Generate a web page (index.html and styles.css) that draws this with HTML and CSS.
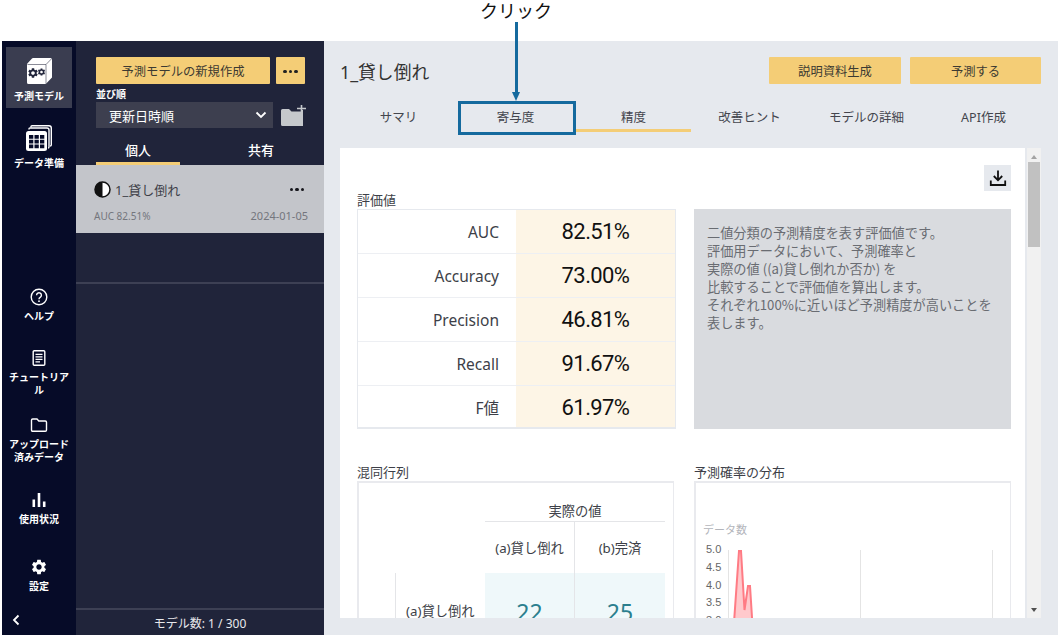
FILE: index.html
```html
<!DOCTYPE html>
<html lang="ja">
<head>
  <meta charset="UTF-8" />
  <title>予測モデル</title>
  <link rel="stylesheet" href="styles.css">
</head>
<body>
  <svg class="defs" width="0" height="0">
    <symbol id="gear" viewBox="0 0 24 24">
      <path d="M19.14 12.94c.04-.3.06-.61.06-.94 0-.32-.02-.64-.07-.94l2.03-1.58c.18-.14.23-.41.12-.61l-1.92-3.32c-.12-.22-.37-.29-.59-.22l-2.39.96c-.5-.38-1.03-.7-1.62-.94l-.36-2.54c-.04-.24-.24-.41-.48-.41h-3.84c-.24 0-.43.17-.47.41l-.36 2.54c-.59.24-1.13.57-1.62.94l-2.39-.96c-.22-.08-.47 0-.59.22L2.74 8.87c-.12.21-.08.47.12.61l2.03 1.58c-.05.3-.09.63-.09.94s.02.64.07.94l-2.03 1.58c-.18.14-.23.41-.12.61l1.92 3.32c.12.22.37.29.59.22l2.39-.96c.5.38 1.03.7 1.62.94l.36 2.54c.05.24.24.41.48.41h3.84c.24 0 .44-.17.47-.41l.36-2.54c.59-.24 1.13-.56 1.62-.94l2.39.96c.22.08.47 0 .59-.22l1.92-3.32c.12-.22.07-.47-.12-.61l-2.01-1.58zM12 15.6c-1.98 0-3.6-1.62-3.6-3.6s1.62-3.6 3.6-3.6 3.6 1.62 3.6 3.6-1.62 3.6-3.6 3.6z"/>
    </symbol>
  </svg>

  <div class="note-label">クリック</div>
  <div class="note-arrow"></div>
  <div class="note-box"></div>

  <div class="app">
    <nav class="sidebar">
      <div class="nav-item nav-active">
        <svg class="icon-cube" viewBox="0 0 25 26">
          <path fill="#fff" d="M6 0H23.500Q25 0 25 1.500V19.500L19.500 25.200Q19 26 18 26H1.500Q0 26 0 24.500V6.500Q0 5.800 .6 5.200L5 .6Q5.400 0 6 0Z"/>
          <path fill="none" stroke="#3a3d50" stroke-width=".6" d="M.5 6.500H19V25.500M19 6.500L24.700 .6"/>
          <use href="#gear" x="0" y="9" width="12" height="12" fill="#20243a"/>
          <use href="#gear" x="10" y="9.500" width="9" height="9" fill="#20243a"/>
        </svg>
        <span>予測モデル</span>
      </div>
      <div class="nav-item nav-data">
        <svg class="icon-table" viewBox="0 0 26 26">
          <path fill="none" stroke="#fff" stroke-width="1.400" d="M5 2.500V1.500Q5 .7 6 .7H23Q25.300 .7 25.300 3V20Q25.300 21 24 21"/>
          <path fill="none" stroke="#fff" stroke-width="1.400" d="M3 4.500V3.800Q3 3 4 3H21Q23 3 23 5V22Q23 23 22 23"/>
          <rect x="0" y="6" width="21" height="20" rx="2.500" fill="#fff"/>
          <path fill="#060b28" d="M3 10h4.300v3.700H3zM8.500 10h4.300v3.700H8.500zM14 10h4.300v3.700H14zM3 14.800h4.300v3.700H3zM8.500 14.800h4.300v3.700H8.500zM14 14.800h4.300v3.700H14zM3 19.600h4.300v3.700H3zM8.500 19.600h4.300v3.700H8.500zM14 19.600h4.300v3.700H14z"/>
        </svg>
        <span>データ準備</span>
      </div>

      <div class="nav-bottom">
        <div class="nav-small nav-help">
          <svg class="icon-18" viewBox="0 0 18 18">
            <circle cx="9" cy="9" r="7.800" fill="none" stroke="#fff" stroke-width="1.400"/>
            <path d="M6.600 7.200a2.400 2.400 0 1 1 3.600 2.100c-.8.500-1.200.9-1.200 1.900" fill="none" stroke="#fff" stroke-width="1.400"/>
            <circle cx="9" cy="13.200" r=".9" fill="#fff"/>
          </svg>
          <span>ヘルプ</span>
        </div>
        <div class="nav-small nav-tutorial">
          <svg class="icon-18" viewBox="0 0 18 18">
            <rect x="3.200" y="1.800" width="11.600" height="14.400" rx="1" fill="none" stroke="#fff" stroke-width="1.400"/>
            <path d="M5.500 5.300h7M5.500 7.800h7M5.500 10.300h7M5.500 12.800h4.500" stroke="#fff" stroke-width="1.200"/>
          </svg>
          <span>チュートリアル</span>
        </div>
        <div class="nav-small nav-upload">
          <svg class="icon-18" viewBox="0 0 18 18">
            <path d="M1.500 4.200Q1.500 3 2.700 3H7L8.800 5H15.300Q16.500 5 16.500 6.200V14Q16.500 15.200 15.300 15.200H2.700Q1.500 15.200 1.500 14Z" fill="none" stroke="#fff" stroke-width="1.400"/>
          </svg>
          <span>アップロード<br>済みデータ</span>
        </div>
        <div class="nav-small nav-usage">
          <svg class="icon-18" viewBox="0 0 18 18">
            <path fill="#fff" d="M2.500 8.500h2.600V16H2.500zM7.700 2h2.600v14H7.700zM12.900 10.500h2.600V16h-2.600z"/>
          </svg>
          <span>使用状況</span>
        </div>
        <div class="nav-small nav-settings">
          <svg class="icon-18" fill="#fff"><use href="#gear" width="18" height="18"/></svg>
          <span>設定</span>
        </div>
        <div class="nav-collapse">
          <svg width="8" height="12" viewBox="0 0 8 12"><path d="M6.500 1.500L2 6l4.500 4.500" fill="none" stroke="#fff" stroke-width="1.800"/></svg>
        </div>
      </div>
    </nav>

    <aside class="model-panel">
      <div class="panel-head">
        <div class="new-row">
          <button class="btn-yellow btn-new">予測モデルの新規作成</button>
          <button class="btn-yellow btn-more"><span class="dots"><i></i><i></i><i></i></span></button>
        </div>
        <div class="sort-label">並び順</div>
        <div class="sort-row">
          <div class="sort-select">
            <span>更新日時順</span>
            <svg width="12" height="8" viewBox="0 0 12 8"><path d="M1.500 1.500L6 6l4.500-4.500" fill="none" stroke="#fff" stroke-width="1.800"/></svg>
          </div>
          <svg class="icon-folder-add" viewBox="0 0 25 21">
            <path fill="#c5c8cc" d="M0 5.500Q0 4 1.500 4H8L10.500 6.500H20V5H22V21H1.500Q0 21 0 19.500Z"/>
            <path stroke="#c5c8cc" stroke-width="1.600" d="M20.500 0V9M16 3.500H25"/>
          </svg>
        </div>
        <div class="owner-tabs">
          <div class="owner-tab owner-active">個人</div>
          <div class="owner-tab">共有</div>
        </div>
      </div>

      <div class="model-card">
        <div class="card-top">
          <svg width="17" height="17" viewBox="0 0 17 17">
            <circle cx="8.500" cy="8.500" r="7.500" fill="#fff" stroke="#111" stroke-width="1.500"/>
            <path d="M8.500 1a7.500 7.500 0 0 0 0 15z" fill="#111"/>
          </svg>
          <span class="card-name">1_貸し倒れ</span>
          <span class="dots dots-dark"><i></i><i></i><i></i></span>
        </div>
        <div class="card-meta">
          <span>AUC 82.51%</span>
          <span class="card-date">2024-01-05</span>
        </div>
      </div>

      <div class="list-rest"></div>
      <div class="panel-foot">モデル数: 1 / 300</div>
    </aside>

    <main class="main">
      <header class="main-head">
        <h1>1_貸し倒れ</h1>
        <div class="head-btns">
          <button class="btn-yellow btn-explain">説明資料生成</button>
          <button class="btn-yellow btn-predict">予測する</button>
        </div>
      </header>

      <div class="tabs">
        <div class="tab">サマリ</div>
        <div class="tab">寄与度</div>
        <div class="tab tab-active">精度</div>
        <div class="tab">改善ヒント</div>
        <div class="tab">モデルの詳細</div>
        <div class="tab">API作成</div>
      </div>

      <div class="content-row">
        <section class="content">
          <div class="tools">
            <div class="btn-download">
              <svg width="18" height="18" viewBox="0 0 18 18">
                <path d="M9 1.500V11M4.800 7L9 11.300 13.200 7M1.800 11.500V16H16.200V11.500" fill="none" stroke="#111" stroke-width="1.800"/>
              </svg>
            </div>
          </div>

          <div class="sections">
            <div>
              <div class="sec-title">評価値</div>
              <div class="scores">
                <div class="score-row"><div class="score-name">AUC</div><div class="score-val">82.51%</div></div>
                <div class="score-row"><div class="score-name">Accuracy</div><div class="score-val">73.00%</div></div>
                <div class="score-row"><div class="score-name">Precision</div><div class="score-val">46.81%</div></div>
                <div class="score-row"><div class="score-name">Recall</div><div class="score-val">91.67%</div></div>
                <div class="score-row"><div class="score-name">F値</div><div class="score-val">61.97%</div></div>
              </div>
            </div>
            <div>
              <div class="sec-title">&nbsp;</div>
              <div class="explain">
                二値分類の予測精度を表す評価値です。<br>
                評価用データにおいて、予測確率と<br>
                実際の値 ((a)貸し倒れか否か) を<br>
                比較することで評価値を算出します。<br>
                それぞれ100%に近いほど予測精度が高いことを<br>
                表します。
              </div>
            </div>

            <div class="sec-lower">
              <div class="sec-title">混同行列</div>
              <div class="box-lower">
                <div class="matrix">
                  <div class="mx-actual">実際の値</div>
                  <div class="mx-head mx-split">(a)貸し倒れ</div>
                  <div class="mx-head">(b)完済</div>
                  <div class="mx-label">(a)貸し倒れ</div>
                  <div class="mx-val mx-split">22</div>
                  <div class="mx-val">25</div>
                </div>
              </div>
            </div>
            <div class="sec-lower">
              <div class="sec-title">予測確率の分布</div>
              <div class="box-lower">
                <svg class="dist-chart" viewBox="696 483 312 200">
                  <text x="703" y="534" class="chart-title">データ数</text>
                  <text x="706" y="553" class="chart-tick">5.0</text>
                  <text x="706" y="571" class="chart-tick">4.5</text>
                  <text x="706" y="589" class="chart-tick">4.0</text>
                  <text x="706" y="606" class="chart-tick">3.5</text>
                  <text x="706" y="624" class="chart-tick">3.0</text>
                  <path d="M728.500 550V680M860.500 550V680M992.500 550V680" stroke="#e4e4e4" fill="none"/>
                  <path d="M730 680L739 551H741L744.500 610L748 586H750L756 680Z" fill="#ffc9cc" stroke="#ff7b84" stroke-width="2"/>
                </svg>
              </div>
            </div>
          </div>
        </section>

        <div class="scrollbar">
          <div class="scroll-up"></div>
          <div class="scroll-thumb"></div>
          <div class="scroll-down"></div>
        </div>
      </div>
    </main>
  </div>
</body>
</html>
```

FILE: styles.css
```css
* {
  box-sizing: border-box;
}
html, body {
  margin: 0;
  background: #fff;
  overflow: hidden;
}
body {
  position: relative;
  height: 637px;
  font-family: "Noto Sans", "Noto Sans CJK JP", sans-serif;
  color: #333;
}
.defs {
  position: absolute;
}

/* annotation over the screenshot */
.note-label {
  position: absolute;
  left: 471px;
  top: 0;
  width: 90px;
  text-align: center;
  font-family: "Noto Sans CJK JP", sans-serif;
  font-size: 18px;
  line-height: 20px;
  color: #111;
  z-index: 3;
}
.note-arrow {
  position: absolute;
  left: 515px;
  top: 22px;
  width: 3px;
  height: 72px;
  background: #156a9e;
  z-index: 3;
}
.note-arrow::after {
  content: "";
  position: absolute;
  left: -3px;
  top: 70px;
  border-left: 4.500px solid transparent;
  border-right: 4.500px solid transparent;
  border-top: 9px solid #156a9e;
}
.note-box {
  position: absolute;
  left: 458px;
  top: 101px;
  width: 118px;
  height: 34px;
  border: 3px solid #156a9e;
  z-index: 3;
}

.app {
  display: flex;
  margin: 41px 0 0 2px;
  width: 1056px;
  height: 594px;
}

/* left nav */
.sidebar {
  width: 74px;
  flex: none;
  display: flex;
  flex-direction: column;
  background: #060b28;
  color: #fff;
  font-size: 10px;
  font-weight: 700;
  line-height: 13px;
  text-align: center;
}
.sidebar span {
  display: block;
}
.nav-item {
  display: flex;
  flex-direction: column;
  align-items: center;
}
.nav-active {
  margin: 6px 4px 0;
  height: 61px;
  padding-top: 11px;
  background: #3a3d50;
}
.nav-active span {
  margin-top: 6px;
}
.icon-cube {
  width: 25px;
  height: 26px;
  display: block;
}
.nav-data {
  margin-top: 17px;
}
.nav-data span {
  margin-top: 6px;
}
.icon-table {
  width: 26px;
  height: 26px;
  display: block;
}
.nav-bottom {
  margin-top: auto;
}
.nav-small {
  display: flex;
  flex-direction: column;
  align-items: center;
}
.nav-small span {
  margin-top: 4px;
  padding: 0 5px;
}
.icon-18 {
  width: 18px;
  height: 18px;
  display: block;
}
.nav-help { height: 61px; }
.nav-tutorial { height: 67px; }
.nav-upload { height: 75px; }
.nav-usage { height: 67px; }
.nav-settings { height: 50px; }
.nav-collapse {
  height: 27px;
  padding: 6px 0 0 10px;
  text-align: left;
}

/* model list */
.model-panel {
  width: 248px;
  flex: none;
  display: flex;
  flex-direction: column;
  background: #20243a;
  color: #fff;
}
.panel-head {
  padding: 16px 19px 0 20px;
}
.new-row {
  display: flex;
  justify-content: space-between;
}
button {
  font-family: inherit;
  border: 0;
  padding: 0;
}
.btn-yellow {
  height: 27px;
  background: #f4cd76;
  color: #3c3a32;
  font-size: 12.300px;
  border-radius: 1px;
}
.btn-new {
  width: 174px;
}
.btn-more {
  width: 29px;
}
.dots {
  display: inline-flex;
  gap: 2px;
  vertical-align: middle;
}
.dots i {
  width: 3.500px;
  height: 3.500px;
  border-radius: 50%;
  background: #222;
}
.sort-label {
  margin-top: 3px;
  font-size: 10px;
  font-weight: 700;
  line-height: 14px;
}
.sort-row {
  display: flex;
  align-items: center;
  justify-content: space-between;
  margin-top: 1px;
}
.sort-select {
  width: 177px;
  height: 26px;
  padding: 0 6px 0 13px;
  display: flex;
  align-items: center;
  justify-content: space-between;
  background: #3d3f4f;
  font-size: 13px;
}
.icon-folder-add {
  width: 25px;
  height: 21px;
  margin-right: -1px;
}
.owner-tabs {
  display: flex;
  margin-top: 9px;
  margin-right: -1px;
  height: 28px;
}
.owner-tab {
  width: 84px;
  text-align: center;
  font-size: 13px;
  font-weight: 500;
  line-height: 26px;
}
.owner-tab + .owner-tab {
  margin-left: 39px;
}
.owner-active {
  border-bottom: 3px solid #f4cd76;
}
.model-card {
  height: 68px;
  padding: 16px 16px 0 18px;
  background: #c3c5ca;
  color: #3d3f48;
}
.card-top {
  display: flex;
  align-items: center;
  height: 17px;
}
.card-name {
  margin-left: 4px;
  font-size: 13px;
  flex: 1;
}
.dots-dark {
  margin-right: 4px;
}
.dots-dark i {
  background: #16161c;
}
.card-meta {
  display: flex;
  justify-content: space-between;
  margin-top: 11px;
  font-size: 10px;
  line-height: 14px;
  color: #74767d;
}
.card-date {
  font-size: 11px;
}
.list-rest {
  flex: 1;
  background: linear-gradient(#20243a 49px, #3d4054 49px, #3d4054 51px, #20243a 51px);
}
.panel-foot {
  height: 27px;
  border-top: 2px solid #3d4054;
  text-align: center;
  font-size: 12px;
  line-height: 27px;
  color: #e8e8ec;
}

/* main */
.main {
  flex: 1;
  padding: 16px 17px 17px 16px;
  display: flex;
  flex-direction: column;
  background: #e6e9ee;
  min-width: 0;
}
.main-head {
  display: flex;
  justify-content: space-between;
  align-items: center;
  height: 27px;
}
h1 {
  margin: 0;
  font-size: 17.800px;
  font-weight: 400;
  color: #333;
}
.head-btns {
  display: flex;
  gap: 9px;
}
.btn-explain {
  width: 132px;
}
.btn-predict {
  width: 131px;
}
.tabs {
  display: grid;
  grid-template-columns: repeat(6, 117px);
  margin-top: 17px;
  height: 31px;
}
.tab {
  text-align: center;
  font-size: 12.500px;
  line-height: 33px;
  color: #43454d;
}
.tab-active {
  margin-left: 2px;
  border-bottom: 3px solid #f4cd76;
  height: 31px;
}
.content-row {
  flex: 1;
  display: flex;
  margin-top: 16px;
  min-height: 0;
}
.content {
  width: 685px;
  flex: none;
  padding: 17px 14px 0 17px;
  background: #fff;
  overflow: hidden;
}
.tools {
  display: flex;
  justify-content: flex-end;
}
.btn-download {
  width: 27px;
  height: 26px;
  display: flex;
  align-items: center;
  justify-content: center;
  background: #e6e9ee;
}
.sections {
  display: grid;
  grid-template-columns: 319px 317px;
  column-gap: 18px;
}
.sec-title {
  font-size: 13px;
  line-height: 18px;
  color: #3d3f48;
}
.scores {
  border: 1px solid #e6e9ee;
  border-bottom-width: 2px;
  height: 220px;
  overflow: hidden;
}
.score-row {
  display: flex;
  height: 44px;
  border-bottom: 1px solid #edeff3;
}
.score-row:last-child {
  border-bottom: 0;
}
.score-name {
  width: 158px;
  padding-right: 17px;
  text-align: right;
  font-size: 15.500px;
  line-height: 44px;
  color: #3d3f48;
}
.score-val {
  flex: 1;
  text-align: center;
  font-family: Roboto, sans-serif;
  font-size: 22px;
  letter-spacing: -.6px;
  line-height: 44px;
  color: #111;
  background: #fdf5e6;
}
.explain {
  height: 220px;
  padding: 15px 13px;
  background: #d9dbdf;
  font-size: 13.200px;
  line-height: 18px;
  color: #696c72;
  font-family: "Noto Sans CJK JP", sans-serif;
}
.sec-lower {
  margin-top: 34px;
}
.box-lower {
  width: 317px;
  height: 240px;
  border: 2px solid #e9eaee;
  border-right-width: 1px;
}

/* confusion matrix */
.matrix {
  display: grid;
  grid-template-columns: 126px 90px 90px;
  grid-template-rows: 39px 51px 76px;
  font-size: 13.300px;
  color: #3d3f48;
}
.mx-actual {
  grid-column: 2 / 4;
  border-bottom: 1px solid #e4e5e8;
  text-align: center;
  line-height: 57px;
  overflow: hidden;
}
.mx-head {
  text-align: center;
  line-height: 52px;
}
.mx-split {
  border-right: 1px solid #e4e5e8;
}
.mx-head.mx-split {
  grid-column: 2;
}
.mx-label {
  grid-column: 1;
  margin-left: 36px;
  padding-left: 10px;
  border-left: 1px solid #e4e5e8;
  line-height: 76px;
}
.mx-val {
  background: #eff8fa;
  text-align: center;
  font-size: 23px;
  line-height: 78px;
  color: #2b7f8e;
}

/* chart */
.dist-chart {
  display: block;
  width: 312px;
  height: 200px;
}
.chart-title {
  font-size: 11px;
  fill: #b3b5bb;
}
.chart-tick {
  font-family: "Liberation Sans", sans-serif;
  font-size: 11px;
  fill: #666;
}

/* scrollbar */
.scrollbar {
  width: 14px;
  margin: 0 0 0 2px;
  background: #f1f1f1;
  position: relative;
}
.scroll-thumb {
  position: absolute;
  left: 1px;
  top: 14px;
  width: 12px;
  height: 85px;
  background: #c1c1c1;
}
.scroll-up, .scroll-down {
  position: absolute;
  left: 4px;
  border-left: 3px solid transparent;
  border-right: 3px solid transparent;
}
.scroll-up {
  top: 7px;
  border-bottom: 4px solid #a3a3a3;
}
.scroll-down {
  bottom: 6px;
  border-top: 4px solid #505050;
}
```
